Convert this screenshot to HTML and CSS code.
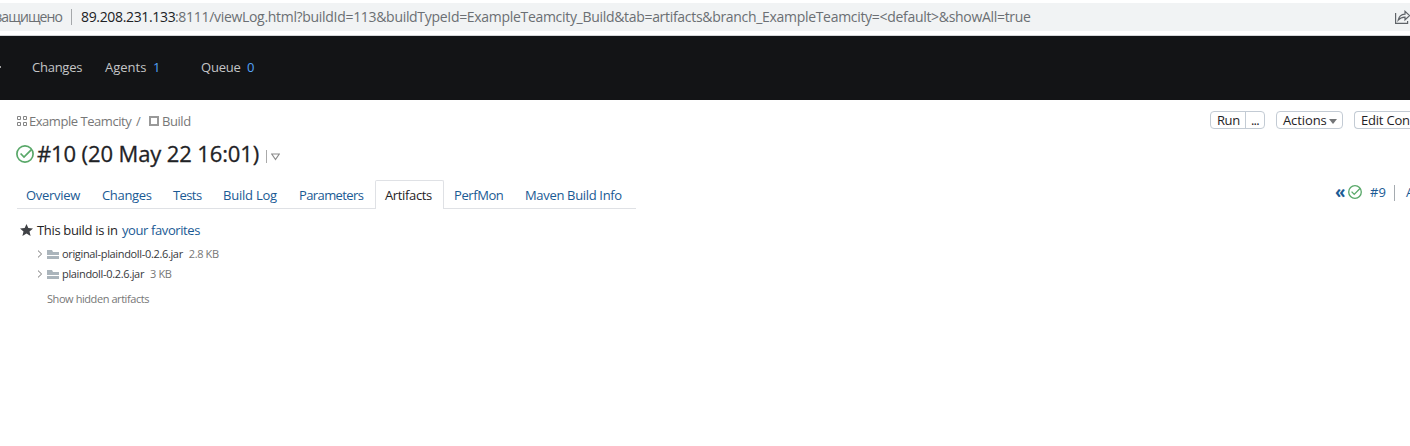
FILE: index.html
```html
<!DOCTYPE html>
<html lang="en">
<head>
<meta charset="utf-8">
<title>#10 (20 May 22 16:01) - Build</title>
<link rel="stylesheet" href="styles.css">
</head>
<body>
<svg class="defs" aria-hidden="true">
  <symbol id="ok" viewBox="0 0 18 18"><circle cx="9" cy="9" r="8.1"/><path d="M4.600 8.500 8 12.100 15.400 4.600"/></symbol>
  <symbol id="folder" viewBox="0 0 12 9"><path d="M0 0h5l1 2h6v3H0zM0 6h12v3H0z"/></symbol>
  <symbol id="chevron" viewBox="0 0 6 8"><path d="M1 .6 4.600 4 1 7.400"/></symbol>
</svg>

<div class="browser">
  <div class="address">
    <span class="security">защищено</span>
    <span class="address-sep"></span>
    <span class="host">89.208.231.133</span><span class="path">:8111/viewLog.html?buildId=113&amp;buildTypeId=ExampleTeamcity_Build&amp;tab=artifacts&amp;branch_ExampleTeamcity=&lt;default&gt;&amp;showAll=true</span>
    <svg class="share" viewBox="0 0 16 14"><path d="M.6 3v10.300h12V11M3.200 10.200C3.800 6.500 6 4.400 10 4.100V1.300l4.600 4.300-4.600 4.200V7.200C6.700 7.300 4.800 8.200 3.200 10.200z"/></svg>
  </div>
</div>

<nav class="header">
  <span class="caret"></span>
  <a class="nav-changes">Changes</a>
  <a class="nav-agents">Agents</a><b class="count count-agents">1</b>
  <a class="nav-queue">Queue</a><b class="count">0</b>
</nav>

<div class="crumb-row">
  <div class="crumbs">
    <svg class="project-icon" viewBox="0 0 10 10"><path d="M.5.5h3v3h-3zM6.500.5h3v3h-3zM.5 6.500h3v3h-3zM6.500 6.500h3v3h-3z"/></svg>
    <span class="crumb-project">Example Teamcity</span>
    <span class="slash">/</span>
    <span class="build-icon"></span>
    <span class="crumb-build">Build</span>
  </div>
  <div class="buttons">
    <div class="btn run"><span class="run-main">Run</span><span class="run-more">...</span></div>
    <div class="btn actions">Actions<i></i></div>
    <div class="btn edit">Edit Con</div>
  </div>
</div>

<div class="title-row">
  <svg class="ok"><use href="#ok"/></svg>
  <h1>#10 (20 May 22 16:01)</h1>
  <span class="title-sep"></span>
  <svg class="title-arrow" viewBox="0 0 9 8"><path d="M.7 1h7.600L4.500 6.500z"/></svg>
</div>

<div class="tab-row">
  <div class="tabs">
    <a class="t-overview">Overview</a>
    <a class="t-changes">Changes</a>
    <a class="t-tests">Tests</a>
    <a class="t-log">Build Log</a>
    <a class="t-params">Parameters</a>
    <a class="t-artifacts active">Artifacts</a>
    <a class="t-perf">PerfMon</a>
    <a class="t-maven">Maven Build Info</a>
  </div>
  <div class="pager">
    <b>«</b>
    <svg class="ok ok-small"><use href="#ok"/></svg>
    <a class="prev">#9</a>
    <span class="pager-sep"></span>
    <a>A</a>
  </div>
</div>

<div class="favorite">
  <svg class="star" viewBox="0 0 13 12"><path d="M6.500 0 8.300 4.100 13 4.500 9.500 7.500 10.600 12 6.500 9.600 2.400 12 3.500 7.500 0 4.500 4.700 4.100z"/></svg>
  <span class="fav-text">This build is in</span><a class="fav-link">your favorites</a>
</div>

<div class="files">
  <div class="file"><svg class="chevron"><use href="#chevron"/></svg><svg class="folder"><use href="#folder"/></svg><span class="name">original-plaindoll-0.2.6.jar</span><span class="size">2.8 KB</span></div>
  <div class="file"><svg class="chevron"><use href="#chevron"/></svg><svg class="folder"><use href="#folder"/></svg><span class="name">plaindoll-0.2.6.jar</span><span class="size">3 KB</span></div>
  <a class="hidden-link">Show hidden artifacts</a>
</div>
</body>
</html>
```
FILE: styles.css
```css
* { box-sizing: border-box; }
body {
  margin: 0;
  height: 446px;
  overflow: hidden;
  background: #fff;
  color: #1f2326;
  font: 13px/18px "Open Sans", "Noto Sans", sans-serif;
  white-space: nowrap;
}
svg { display: block; flex: none; fill: none; }
.defs { position: absolute; width: 0; height: 0; }

.browser { height: 36px; padding-top: 3px; border-bottom: 1px solid #d5d7da; }
.address {
  display: flex;
  align-items: center;
  height: 28px;
  background: #f1f3f4;
  color: #6b6f73;
  font-size: 14px;
}
.security { display: flex; justify-content: flex-end; flex: none; width: 62px; letter-spacing: -.9px; }
.address-sep { width: 1px; height: 16px; margin: 0 9px; background: #a5a8ab; }
.host { color: #202124; width: 94px; letter-spacing: -.34px; }
.path { letter-spacing: -.308px; }
.share { width: 16px; height: 14px; margin: 0 -1px 0 auto; stroke: #5f6368; stroke-width: 1.2; }

.header {
  display: flex;
  align-items: center;
  height: 64px;
  padding-bottom: 2px;
  background: #131416;
  color: #c4c5c6;
}
.caret { width: 32px; height: 2px; background: linear-gradient(90deg, #a0a0a0 1px, transparent 1px); }
.nav-changes { width: 73px; letter-spacing: -.25px; }
.nav-agents { width: 48px; }
.nav-queue { width: 46px; letter-spacing: -.2px; }
.count { color: #54a3f7; font-weight: 400; }
.count-agents { width: 48px; }

.crumb-row { display: flex; height: 40px; padding-left: 17px; }
.crumbs { display: flex; align-items: center; height: 41px; color: #777; }
.project-icon { width: 10px; height: 10px; margin: 1px 2px 0 0; stroke: #858585; }
.crumb-project { width: 107px; letter-spacing: -.46px; }
.slash { width: 13px; }
.build-icon { width: 10px; height: 10px; margin: 1px 3px 0 0; border: 2px solid #999; }
.crumb-build { letter-spacing: -.45px; }
.buttons { display: flex; margin-left: auto; padding-top: 11px; gap: 11px; }
.btn { display: flex; height: 18px; border: 1px solid #c3cbd4; border-radius: 4px; line-height: 17px; }
.run { width: 55px; }
.run-main { width: 35px; padding-left: 6px; border-right: 1px solid #c3cbd4; letter-spacing: -.4px; }
.run-more { padding-left: 5px; letter-spacing: -.8px; }
.actions { width: 67px; padding-left: 6px; letter-spacing: -.1px; }
.actions i { width: 0; height: 0; margin: 7px 0 0 2px; border: 4px solid transparent; border-top: 5px solid #737577; border-bottom: 0; }
.edit { width: 56px; padding-left: 6px; border-right: 0; border-radius: 4px 0 0 4px; letter-spacing: -.2px; }

.title-row { display: flex; align-items: center; height: 28px; padding-left: 16px; }
.ok { width: 18px; height: 18px; stroke: #59a869; stroke-width: 1.7; }
h1 { width: 229px; margin: -2px 0 0 3px; font-size: 22px; font-weight: 400; line-height: 28px; letter-spacing: -.12px; -webkit-text-stroke: .3px; }
.title-sep { width: 1px; height: 13px; margin: 4px 4px 0 0; background: #aaa; }
.title-arrow { width: 9px; height: 8px; margin-top: 6px; stroke: #8b8b8b; stroke-width: 1.2; }

.tab-row { display: flex; height: 41px; padding: 12px 0 0 17px; }
.tabs { display: flex; width: 619px; height: 29px; color: #1a5a94; }
.tabs a { height: 29px; padding: 1px 0 0 9px; border-bottom: 1px solid #dfe1e5; line-height: 29px; }
.tabs .t-overview { width: 76px; letter-spacing: -.3px; }
.tabs .t-changes { width: 71px; letter-spacing: -.33px; }
.tabs .t-tests { width: 50px; letter-spacing: -.6px; }
.tabs .t-log { width: 76px; letter-spacing: -.22px; }
.tabs .t-params { width: 85px; letter-spacing: -.6px; }
.tabs .t-artifacts { width: 69px; letter-spacing: -.35px; }
.tabs .t-perf { width: 71px; padding-left: 10px; letter-spacing: -.42px; }
.tabs .t-maven { width: 121px; padding-left: 10px; letter-spacing: -.33px; }
.tabs .active { padding-top: 0; border: 1px solid #dfe1e5; border-bottom: 0; border-radius: 2px 2px 0 0; color: #1f2326; }
.pager { display: flex; align-items: center; height: 23px; width: 75px; margin-left: auto; color: #1a5a94; }
.pager > * { flex: none; }
.pager b { width: 13px; font-size: 17px; line-height: 20px; }
.ok-small { width: 14px; height: 14px; margin-right: 8px; }
.prev { width: 24px; }
.pager-sep { width: 1px; height: 16px; margin: 3px 11px 0 0; background: #a5abb0; }

.favorite { display: flex; align-items: center; height: 35px; padding: 6px 0 0 20px; }
.star { width: 13px; height: 12px; margin-right: 4px; fill: #404246; }
.fav-text { width: 85px; letter-spacing: -.33px; }
.fav-link { color: #1a5a94; letter-spacing: -.4px; }

.files { display: flex; flex-direction: column; padding-left: 37px; font-size: 11px; color: #777; }
.file { display: flex; align-items: center; height: 20px; }
.chevron { width: 6px; height: 8px; margin-right: 4px; stroke: #777; }
.folder { width: 12px; height: 9px; margin-right: 3px; fill: #aab4bb; }
.name { margin-right: 6px; color: #36383b; letter-spacing: -.34px; }
.size { letter-spacing: -.38px; }
.hidden-link { margin: 6px 0 0 10px; letter-spacing: -.43px; }
```
